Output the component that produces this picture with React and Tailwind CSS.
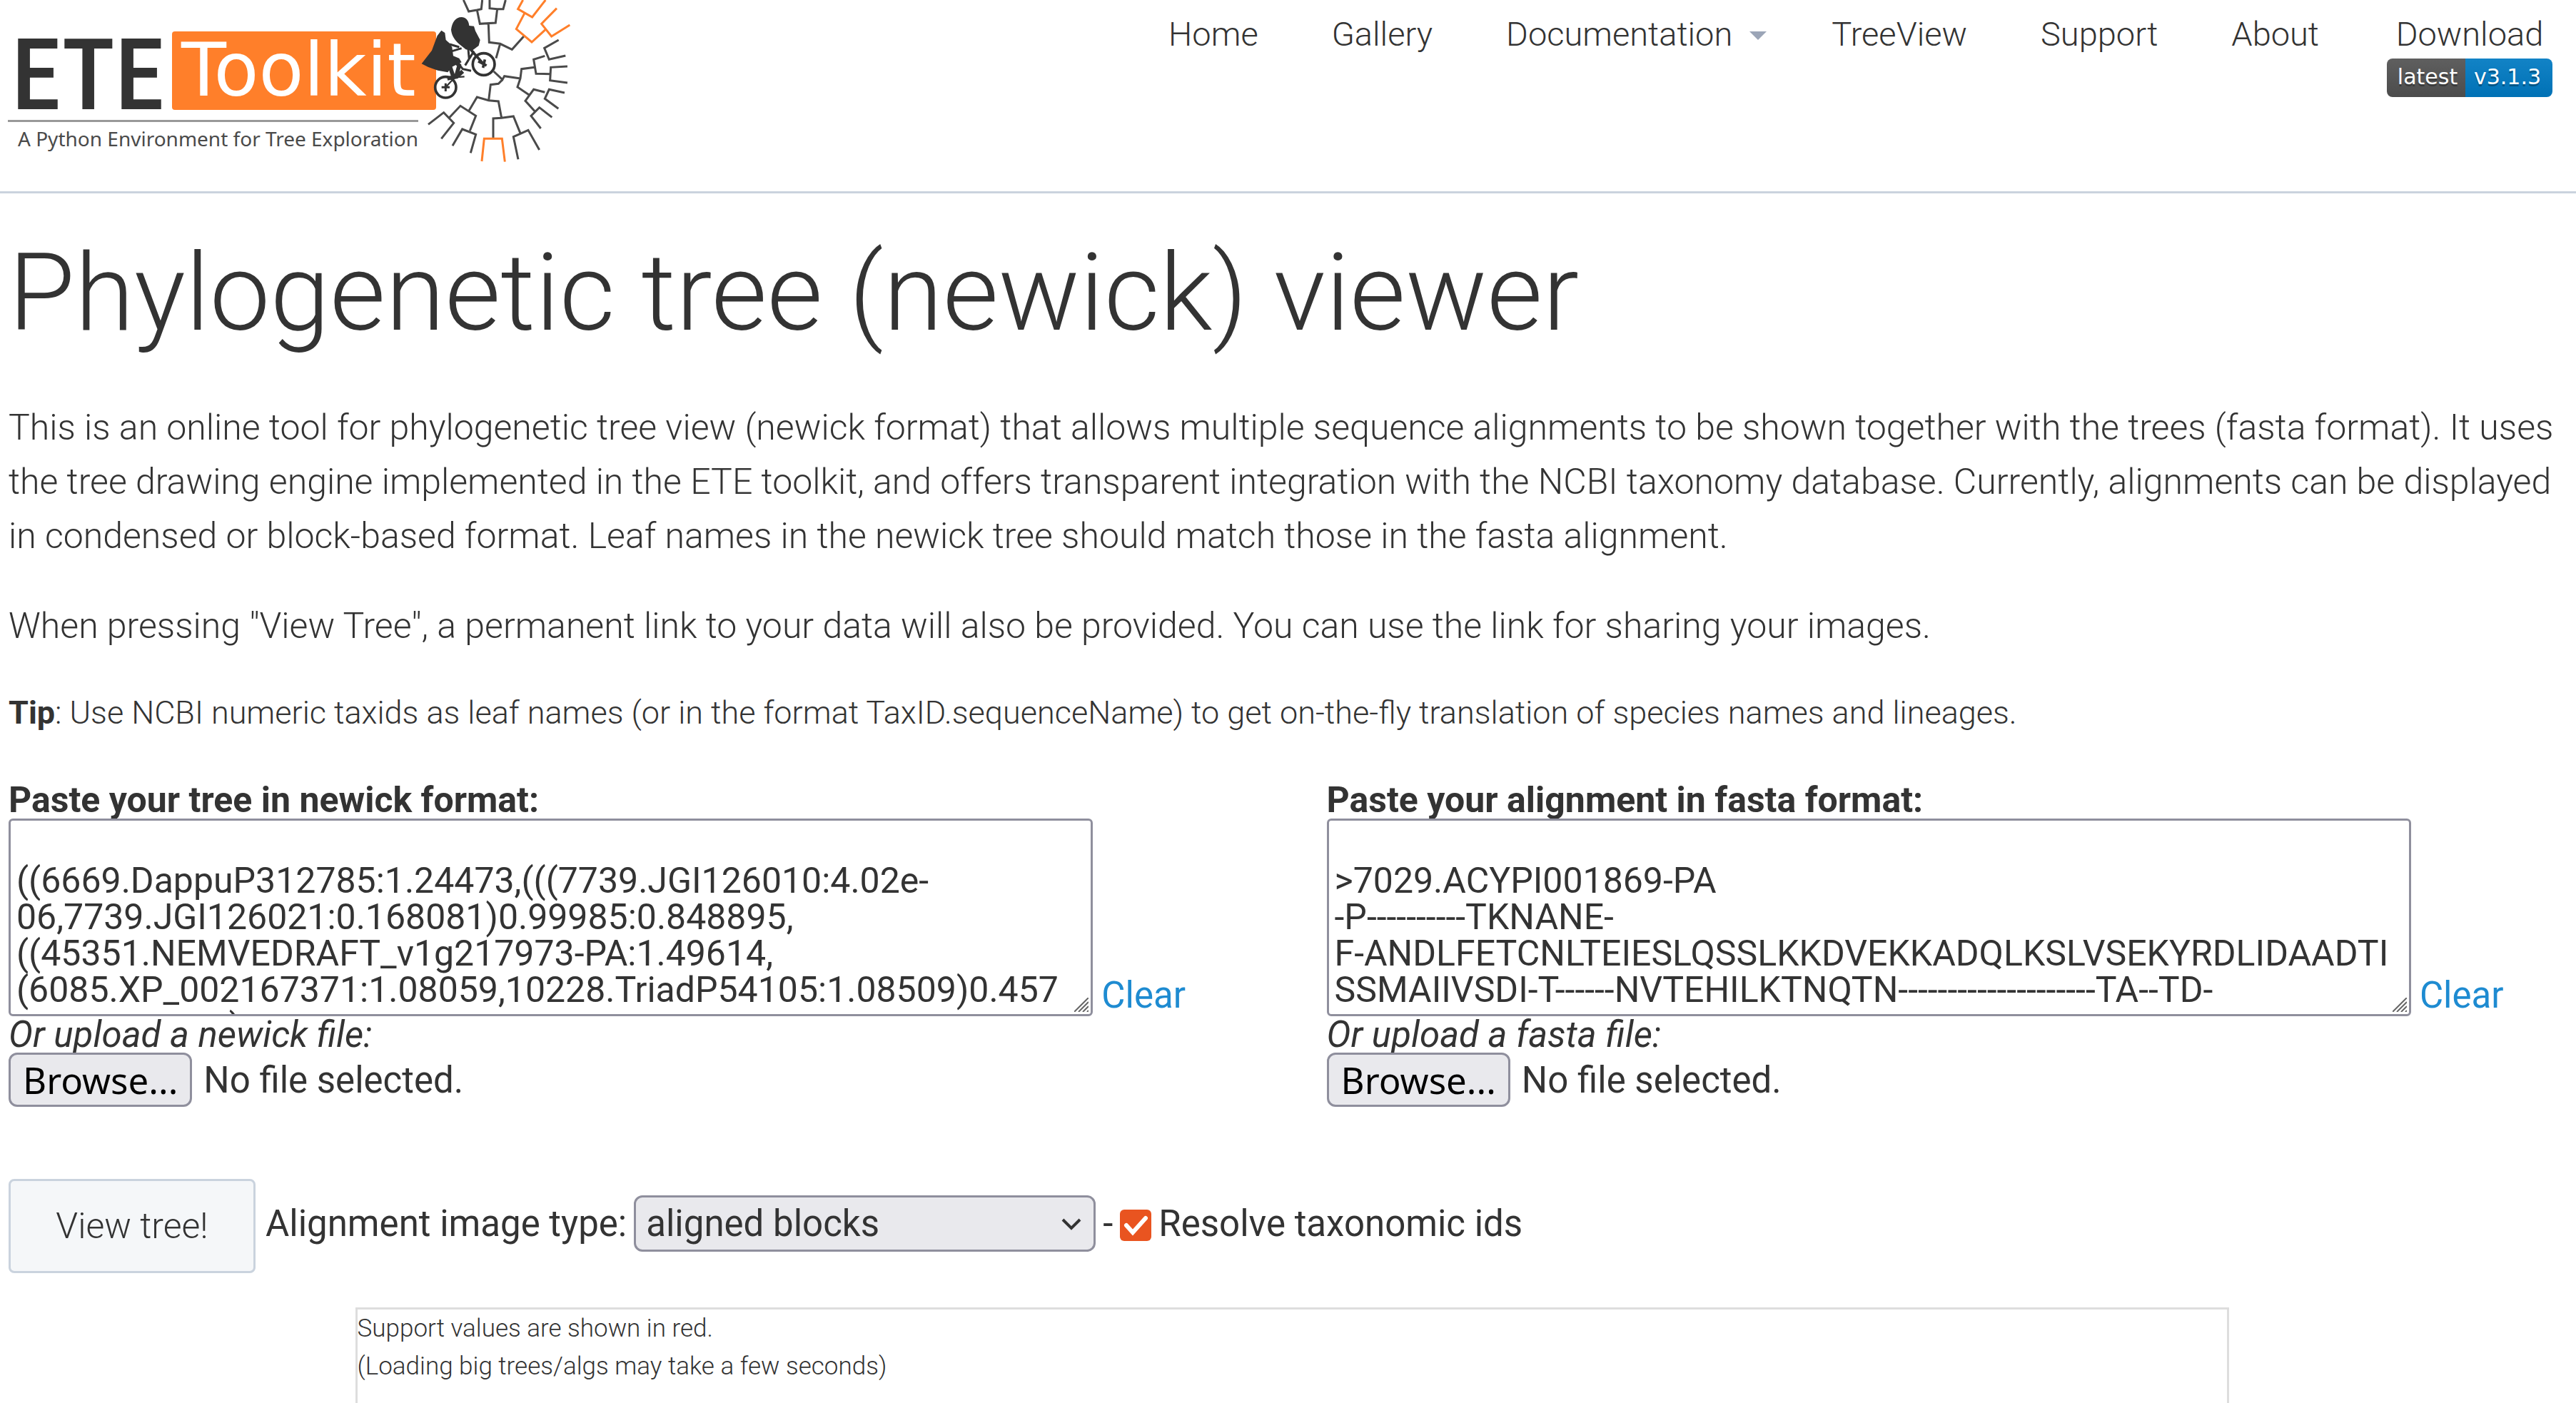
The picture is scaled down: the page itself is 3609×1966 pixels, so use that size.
import React, { useRef, useState } from "react";

const NEWICK = `
((6669.DappuP312785:1.24473,(((7739.JGI126010:4.02e-
06,7739.JGI126021:0.168081)0.99985:0.848895,
((45351.NEMVEDRAFT_v1g217973-PA:1.49614,
(6085.XP_002167371:1.08059,10228.TriadP54105:1.08509)0.457
                        )`;

const FASTA = `
>7029.ACYPI001869-PA
-P----------TKNANE-
F-ANDLFETCNLTEIESLQSSLKKDVEKKADQLKSLVSEKYRDLIDAADTI
SSMAIIVSDI-T------NVTEHILKTNQTN--------------------TA--TD-`;

function Logo() {
  return (
    <svg width="800" height="228" viewBox="0 0 800 228" role="img" aria-label="ETE Toolkit">
      <text x="16" y="153" fontSize="140" fontWeight="500" fill="#333" fontFamily='"Roboto Condensed", "Liberation Sans", sans-serif'>
        ETE
      </text>
      <rect x="241" y="44" width="370" height="110" rx="4" fill="#ff7f2a" />
      <text x="254" y="134" fontSize="103" fill="#fff" fontFamily='"DejaVu Sans", sans-serif'>
        Toolkit
      </text>
      <path d="M11 169.500H586" stroke="#999" strokeWidth="3" />
      <text x="25" y="205" fontSize="28" fill="#4a4a4a" fontFamily='"Noto Sans", sans-serif'>
        A Python Environment for Tree Exploration
      </text>
      <g transform="translate(580 0) scale(0.3333)" fill="none" stroke="#4a4a4a" strokeWidth="9">
        <path d="M208 0L230 48L265 42L277 100L343 96L350 38L375 38L385 0M287 0L283 38L265 42M318 0V35L350 38M313 100L316 178L362 184L412 208L462 152M362 184L345 245M335 300L372 335L380 320L447 330M372 335L355 352L322 356L314 422" />
        <path d="M485 400L435 366L447 330L452 290L507 283M550 235L503 250L513 310L575 311M608 168L548 202L568 250L637 234M645 279L575 283L572 338L645 348M550 388L503 376L468 424L508 468M485 400L503 376M633 390L568 376L550 415L607 457M580 493L527 452L492 487L533 540" />
        <path d="M230 467L265 408L314 422L355 426L368 496M333 580V498L368 496L418 489L447 560M438 670L418 575L447 562L480 547L527 630M235 550L260 487L195 445L148 495M60 523L125 473L167 517L115 583M162 613L203 543L260 565L238 643" />
        <g stroke="#ff7f2a" strokeWidth="9">
          <path d="M285 678L295 583H370L382 680M465 55L430 122L495 177L552 125M458 0L437 38L497 72L553 0M600 35L536 100L578 153L655 105" />
        </g>
        <circle cx="133" cy="367" r="44" fill="#fff" stroke="#333" strokeWidth="11" />
        <circle cx="293" cy="270" r="46" fill="#fff" stroke="#333" strokeWidth="11" />
        <g stroke="#333">
          <path d="M133 350V384M116 367H150" strokeWidth="9" />
          <path d="M270 258L305 276M298 250L290 285M235 205L293 270" strokeWidth="11" />
          <path d="M160 215L200 203M150 186L190 198M228 205L232 250M252 215L215 275M168 245L205 290L240 298" strokeWidth="9" />
          <path d="M148 270L168 330M160 245L190 275L176 325M140 330L180 322L205 300" strokeWidth="17" />
          <path d="M133 367L172 325L212 322" strokeWidth="7" />
        </g>
        <g fill="#333" stroke="none">
          <path d="M115 128L98 150L75 212L32 268L60 282L100 296L142 304L158 282L182 270L200 262L190 245L165 235L160 198L150 182L134 168L130 138Z" />
          <path d="M200 72C176 72 160 92 156 125C158 148 172 170 190 185L218 208L245 212L272 192L278 168L258 130L252 110L232 108C230 84 216 72 200 72Z" />
        </g>
      </g>
    </svg>
  );
}

function NavLink({ children }) {
  return (
    <li>
      <a href="#" className="block">
        {children}
      </a>
    </li>
  );
}

function Header() {
  return (
    <header className="flex h-[271px] items-start justify-between border-b-[3px] border-[#cad3de]">
      <a href="#">
        <Logo />
      </a>
      <nav className="pt-5 pr-[33px]">
        <ul className="flex gap-[103px] text-[47px] leading-[56px] font-light">
          <NavLink>Home</NavLink>
          <NavLink>Gallery</NavLink>
          <li className="-mr-3">
            <a href="#" className="flex items-center gap-6">
              Documentation
              <svg width="24" height="12" viewBox="0 0 24 12" aria-hidden="true" className="mt-1">
                <path d="M0 0H24L12 12Z" fill="#9ba5b7" />
              </svg>
            </a>
          </li>
          <NavLink>TreeView</NavLink>
          <NavLink>Support</NavLink>
          <NavLink>About</NavLink>
          <li className="-ml-2">
            <a href="#" className="flex flex-col items-center gap-1.5">
              Download
              <span className="flex h-[54px] overflow-hidden rounded-lg font-['DejaVu_Sans',sans-serif] text-[30px] leading-[52px] font-normal text-white [text-shadow:0_3px_0_rgba(1,1,1,0.3)]">
                <span className="w-[110px] bg-linear-to-b from-[#5f5f5f] to-[#4c4c4c] pl-1 text-center">latest</span>
                <span className="w-[122px] bg-linear-to-b from-[#1283c6] to-[#0071b5] pr-1 text-center">v3.1.3</span>
              </span>
            </a>
          </li>
        </ul>
      </nav>
    </header>
  );
}

function SourceField({ id, label, uploadLabel, initial }) {
  const [value, setValue] = useState(initial);
  const file = useRef(null);
  return (
    <div className="w-[48%] text-[51px] leading-[51px]">
      <label htmlFor={id} className="block text-[50px] leading-[51px] font-bold">
        {label}
      </label>
      <div className="flex items-end gap-3">
        <div className="relative w-[88%]">
          <textarea
            id={id}
            rows={5}
            wrap="off"
            value={value}
            onChange={(e) => setValue(e.target.value)}
            className="block w-full resize-none overflow-hidden rounded-md border-[3px] border-[#8f8f9d] bg-white py-2 pl-2 text-[50px] leading-[51px]"
          />
          <svg width="20" height="20" viewBox="0 0 20 20" aria-hidden="true" className="absolute right-1.5 bottom-1.5">
            <path d="M0 20L20 0M6 20L20 6M12 20L20 12M18 20L20 18" stroke="#666" strokeWidth="2" />
          </svg>
        </div>
        <button type="button" onClick={() => setValue("")} className="pb-1 text-[#1e8bd1]">
          Clear
        </button>
      </div>
      <label htmlFor={id + "-file"} className="block italic">
        {uploadLabel}
      </label>
      <input ref={file} id={id + "-file"} type="file" className="hidden" />
      <div className="flex items-center gap-4">
        <button
          type="button"
          onClick={() => file.current.click()}
          className="h-[76px] rounded-xl border-[3px] border-[#8f8f9d] bg-[#e9e9ed] px-[17px] font-['Noto_Sans',sans-serif] text-black"
        >
          Browse...
        </button>
        <span>No file selected.</span>
      </div>
    </div>
  );
}

function Controls() {
  return (
    <div className="mt-[101px] flex items-center gap-3.5">
      <button
        type="submit"
        className="h-[132px] w-[346px] rounded-lg border-[3px] border-[#cad3de] bg-[#f5f7f9] text-[50px] leading-[50px] font-light"
      >
        View tree!
      </button>
      <div className="flex items-center gap-2.5 pb-[7px] text-[51px] leading-[51px]">
        <label htmlFor="image-type">Alignment image type:</label>
        <div className="relative">
          <select
            id="image-type"
            className="block h-[79px] w-[647px] appearance-none rounded-xl border-[3px] border-[#8f8f9d] bg-[#e9e9ed] pl-3.5 leading-[60px]"
          >
            <option>aligned blocks</option>
          </select>
          <svg width="28" height="18" viewBox="0 0 28 18" aria-hidden="true" className="pointer-events-none absolute top-[32px] right-5">
            <path d="M2 2L14 14L26 2" fill="none" stroke="#333" strokeWidth="4" />
          </svg>
        </div>
        <span>-</span>
        <div className="relative mt-1">
          <input
            id="resolve"
            type="checkbox"
            defaultChecked
            className="block size-11 appearance-none rounded-md bg-white checked:bg-[#e95420]"
          />
          <svg width="44" height="44" viewBox="0 0 44 44" aria-hidden="true" className="pointer-events-none absolute top-0 left-0">
            <path d="M9 22L18 32L36 12" fill="none" stroke="#fff" strokeWidth="6" strokeLinecap="round" />
          </svg>
        </div>
        <label htmlFor="resolve">Resolve taxonomic ids</label>
      </div>
    </div>
  );
}

export default function App() {
  return (
    <div className="flex min-h-screen flex-col bg-white font-['Roboto',sans-serif] text-[#333]">
      <Header />
      <main className="flex flex-1 flex-col pl-3">
        <h1 className="mt-[49px] text-[151px] leading-[181px] font-light">Phylogenetic tree (newick) viewer</h1>
        <div className="mt-[60px] flex flex-col gap-[50px] text-[50px] leading-[76px] font-light">
          <p>
            This is an online tool for phylogenetic tree view (newick format) that allows multiple sequence alignments to be
            shown together with the trees (fasta format). It uses the tree drawing engine implemented in the ETE toolkit, and
            offers transparent integration with the NCBI taxonomy database. Currently, alignments can be displayed in
            condensed or block-based format. Leaf names in the newick tree should match those in the fasta alignment.
          </p>
          <p>
            When pressing "View Tree", a permanent link to your data will also be provided. You can use the link for sharing
            your images.
          </p>
          <p className="text-[45px] leading-[68px]">
            <b className="font-bold">Tip</b>: Use NCBI numeric taxids as leaf names (or in the format TaxID.sequenceName) to
            get on-the-fly translation of species names and lineages.
          </p>
        </div>
        <form className="mt-[63px]" onSubmit={(e) => e.preventDefault()}>
          <div className="flex gap-[120px]">
            <SourceField
              id="newick"
              label="Paste your tree in newick format:"
              uploadLabel="Or upload a newick file:"
              initial={NEWICK}
            />
            <SourceField
              id="fasta"
              label="Paste your alignment in fasta format:"
              uploadLabel="Or upload a fasta file:"
              initial={FASTA}
            />
          </div>
          <Controls />
        </form>
        <div className="mx-auto mt-12 w-[73%] flex-1 border-[3px] border-b-0 border-[#ddd] text-[35px] leading-[53px] font-light">
          Support values are shown in red.
          <br />
          (Loading big trees/algs may take a few seconds)
        </div>
      </main>
    </div>
  );
}
